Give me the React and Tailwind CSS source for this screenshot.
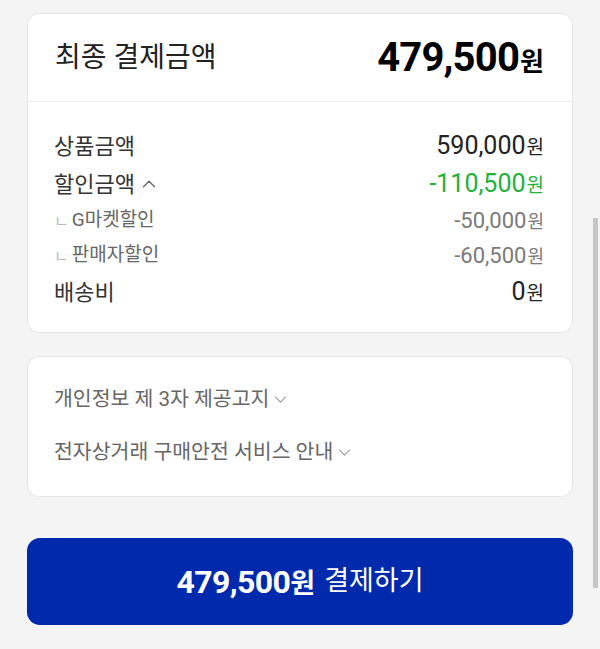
import { ChevronDown, ChevronUp } from 'lucide-react'

const font = { fontFamily: 'Roboto, "Noto Sans CJK KR", sans-serif' }

function Won({ className = '' }) {
  return <span className={`ml-[1px] ${className}`}>원</span>
}

function Row({ label, value, sub, green, children }) {
  return (
    <div className={`flex items-center justify-between ${sub ? 'h-[35px]' : 'h-[38px]'}`}>
      <div className="flex items-center">
        {sub && <span className="text-[16px] text-[#bbb] mr-[3px] mt-[3px] leading-none">ㄴ</span>}
        <span className={sub ? 'text-[19px] text-[#666]' : 'text-[22px] text-[#333]'}>{label}</span>
        {children}
      </div>
      <div className={`flex items-baseline ${green ? 'text-[#23b13a]' : sub ? 'text-[#7a7a7a]' : 'text-[#222]'}`}>
        <span className={sub ? 'text-[22px]' : 'text-[25px]'}>{value}</span>
        <Won className={sub ? 'text-[18px]' : 'text-[19px]'} />
      </div>
    </div>
  )
}

export default function App() {
  return (
    <div className="relative min-h-[649px] bg-[#f4f4f4] px-[27px] pt-[13px] pb-6" style={font}>
      {/* summary card */}
      <div className="bg-white border border-[#e4e4e4] rounded-[12px]">
        <div className="h-[88px] flex items-center justify-between pl-[27px] pr-[28px] border-b border-[#ececec]">
          <span className="text-[28px] text-[#222]">최종 결제금액</span>
          <div className="flex items-baseline text-black font-bold">
            <span className="text-[40px] tracking-[-0.8px]">479,500</span>
            <Won className="text-[26px]" />
          </div>
        </div>
        <div className="pl-[26px] pr-[28px] pt-[25px] pb-[21px]">
          <Row label="상품금액" value="590,000" />
          <Row label="할인금액" value="-110,500" green>
            <ChevronUp size={22} strokeWidth={1.4} className="ml-[3px] text-[#666]" />
          </Row>
          <Row label="G마켓할인" value="-50,000" sub />
          <Row label="판매자할인" value="-60,500" sub />
          <Row label="배송비" value="0" />
        </div>
      </div>

      {/* notices card */}
      <div className="mt-[23px] bg-white border border-[#e4e4e4] rounded-[12px] pl-[26px] pt-[27px] pb-[29px] flex flex-col gap-[23px]">
        <div className="h-[30px] flex items-center text-[20.5px] text-[#666]">
          개인정보 제 3자 제공고지
          <ChevronDown size={21} strokeWidth={1.2} className="ml-[1px] text-[#999]" />
        </div>
        <div className="h-[30px] flex items-center text-[20.5px] text-[#666]">
          전자상거래 구매안전 서비스 안내
          <ChevronDown size={21} strokeWidth={1.2} className="ml-[1px] text-[#999]" />
        </div>
      </div>

      {/* pay button */}
      <button className="mt-[41px] w-full h-[87px] rounded-[13px] bg-[#0029ab] text-white flex items-center justify-center">
        <span className="flex items-baseline font-bold">
          <span className="text-[32px] tracking-[-0.6px]">479,500</span>
          <span className="text-[27px]">원</span>
        </span>
        <span className="ml-[9px] text-[27px]">결제하기</span>
      </button>

      {/* overlay scrollbar */}
      <div className="absolute right-[2px] top-[218px] w-[5px] h-[370px] bg-[#c6c6c6]" />
    </div>
  )
}
